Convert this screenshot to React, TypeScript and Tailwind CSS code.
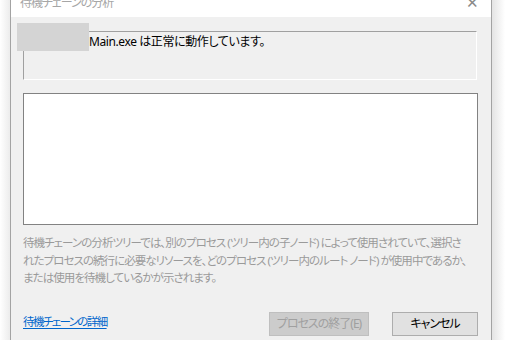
import React from "react";

const font = "font-['Noto_Sans','Noto_Sans_CJK_JP',sans-serif] [font-feature-settings:'palt']";

export default function App() {
  return (
    <div className={`w-[505px] h-[340px] overflow-hidden bg-white flex ${font}`}>
      <div className="w-[10px] h-full bg-gradient-to-r from-white to-[#ececec]" />
      <div className="w-[482px] h-full flex flex-col border-l border-r border-[#a3a3a3]">
        {/* title bar */}
        <div className="h-[17px] bg-white flex justify-between overflow-hidden pl-[9px] pr-[12px]">
          <div className="text-[12px] leading-[14px] -mt-[4px] tracking-[-1px] text-[#a6a6a6]">待機チェーンの分析</div>
          <div className="text-[15px] leading-[14px] -mt-[5px] text-[#8a8a8a] font-light">✕</div>
        </div>
        {/* body */}
        <div className="flex-1 bg-[#f0f0f0] pl-[12px] pr-[13px] pt-[14px] flex flex-col">
          {/* group box */}
          <div className="relative h-[49px] border-t border-l border-[#a0a0a0] border-b border-r border-b-white border-r-white mr-[1px]">
            <div className="absolute -left-[7px] -top-[9px] w-[72px] h-[28px] bg-[#d4d4d4]" />
            <div className="pl-[65px] pt-[3px] text-[12px] leading-[14px] tracking-[-0.4px] text-black">
              Main.exe は正常に動作しています。
            </div>
          </div>
          {/* list box */}
          <div className="mt-[13px] h-[132px] bg-white border border-[#828282]" />
          {/* description */}
          <div className="mt-[9px] text-[11.5px] leading-[17.5px] tracking-[-0.95px] text-[#9a9a9a] whitespace-nowrap">
            <div>待機チェーンの分析ツリーでは、別のプロセス (ツリー内の子ノード) によって使用されていて、選択さ</div>
            <div>れたプロセスの続行に必要なリソースを、どのプロセス (ツリー内のルート ノード) が使用中であるか、</div>
            <div>または使用を待機しているかが示されます。</div>
          </div>
          <div className="flex-1" />
          {/* footer */}
          <div className="flex items-center mb-[4px]">
            <span className="-mt-[5px] text-[11.5px] leading-[14px] tracking-[-1.6px] text-[#0066cc] underline underline-offset-2">待機チェーンの詳細</span>
            <div className="flex-1" />
            <div className="w-[100px] h-[24px] bg-[#cccccc] border border-[#bfbfbf] flex items-center justify-center text-[12px] tracking-[-1px] text-[#a0a0a0]">
              プロセスの終了(E)
            </div>
            <div className="ml-[23px] w-[86px] h-[24px] bg-[#e1e1e1] border border-[#adadad] flex items-center justify-center text-[12px] tracking-[-1px] text-black">
              キャンセル
            </div>
          </div>
        </div>
      </div>
      <div className="w-[13px] h-full bg-gradient-to-r from-[#e4e4e4] to-white" />
    </div>
  );
}
